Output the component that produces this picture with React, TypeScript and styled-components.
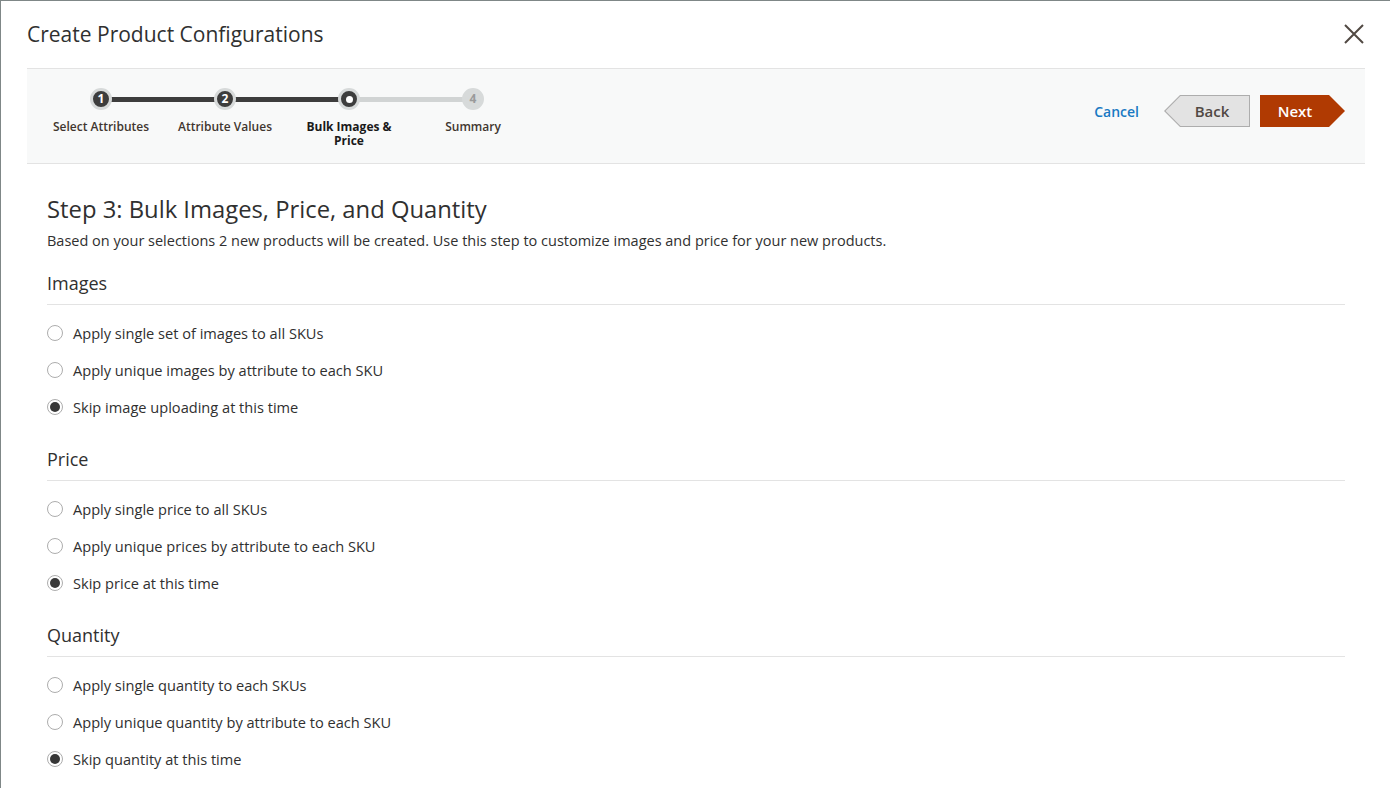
import styled, { createGlobalStyle } from "styled-components";

const GlobalStyle = createGlobalStyle`
  html, body {
    margin: 0;
    padding: 0;
    background: #fff;
  }
  body {
    font-family: "Open Sans", "Noto Sans", sans-serif;
    color: #303030;
    font-size: 14px;
  }
`;

const Page = styled.div`
  min-height: 788px;
  box-sizing: border-box;
  border-top: 1px solid #7f8787;
  border-left: 1px solid #7f8787;
  background: #fff;
`;

const Header = styled.header`
  display: flex;
  justify-content: space-between;
  align-items: center;
  padding: 19px 26px 20px 26px;
`;

const Title = styled.h1`
  margin: 0;
  font-size: 21px;
  line-height: 28px;
  font-weight: 400;
  color: #303030;
`;

const CloseButton = styled.button`
  width: 20px;
  height: 20px;
  padding: 0;
  border: 0;
  background: none;
  display: flex;
  cursor: pointer;
`;

const Bar = styled.div`
  display: flex;
  justify-content: space-between;
  align-items: flex-start;
  height: 96px;
  box-sizing: border-box;
  margin: 0 25px 0 26px;
  padding: 0 20px 0 12px;
  background: #f8f9f9;
  border-top: 1px solid #e3e3e3;
  border-bottom: 1px solid #e3e3e3;
`;

const Steps = styled.ol`
  display: flex;
  list-style: none;
  margin: 0;
  padding: 0;
`;

const Step = styled.li<{ $done: boolean; $last: boolean }>`
  position: relative;
  width: 124px;
  display: flex;
  flex-direction: column;
  align-items: center;
  padding-top: 19px;

  &::after {
    content: "";
    display: ${(p) => (p.$last ? "none" : "block")};
    position: absolute;
    top: 28px;
    left: 50%;
    width: 100%;
    height: 5px;
    background: ${(p) => (p.$done ? "#3d3d3d" : "#d1d4d4")};
    z-index: 0;
  }
`;

const Dot = styled.span<{ $state: "done" | "active" | "todo" }>`
  position: relative;
  z-index: 1;
  width: 22px;
  height: 22px;
  box-sizing: border-box;
  border-radius: 50%;
  border: 3px solid #d7dada;
  background: ${(p) => (p.$state === "todo" ? "#d7dada" : "#3d3d3d")};
  color: ${(p) => (p.$state === "todo" ? "#9a9a9a" : "#fff")};
  font-size: 12px;
  font-weight: 700;
  line-height: 16px;
  display: flex;
  align-items: center;
  justify-content: center;

  &::before {
    content: "";
    display: ${(p) => (p.$state === "active" ? "block" : "none")};
    width: 7px;
    height: 7px;
    border-radius: 50%;
    background: #fff;
  }
`;

const StepLabel = styled.span<{ $active: boolean }>`
  margin-top: 10px;
  max-width: 104px;
  text-align: center;
  font-size: 12px;
  line-height: 14px;
  font-weight: ${(p) => (p.$active ? 700 : 600)};
  color: ${(p) => (p.$active ? "#1a1a1a" : "#41362f")};
`;

const Actions = styled.div`
  display: flex;
  align-items: center;
  margin-top: 26px;
`;

const CancelLink = styled.a`
  font-size: 14px;
  font-weight: 600;
  color: #1979c3;
  text-decoration: none;
  margin-right: 25px;
  cursor: pointer;
`;

const BackButton = styled.button`
  position: relative;
  width: 86px;
  height: 32px;
  border: 0;
  padding: 0 0 0 10px;
  background: #adadad;
  clip-path: polygon(16px 0, 100% 0, 100% 100%, 16px 100%, 0 50%);
  font-family: inherit;
  font-size: 15px;
  font-weight: 600;
  color: #514943;
  cursor: pointer;

  &::before {
    content: "";
    position: absolute;
    inset: 1px;
    background: #e3e3e3;
    clip-path: polygon(15.5px 0, 100% 0, 100% 100%, 15.5px 100%, 0.6px 50%);
  }

  span {
    position: relative;
  }
`;

const NextButton = styled.button`
  width: 85px;
  height: 32px;
  border: 0;
  margin-left: 10px;
  padding: 0 15px 0 0;
  background: #b03a02;
  clip-path: polygon(0 0, 69px 0, 100% 50%, 69px 100%, 0 100%);
  font-family: inherit;
  font-size: 15px;
  font-weight: 600;
  color: #fff;
  cursor: pointer;
`;

const Content = styled.main`
  padding: 30px 45px 20px 46px;
`;

const StepTitle = styled.h2`
  margin: 0;
  font-size: 23.8px;
  line-height: 30px;
  font-weight: 400;
  color: #303030;
`;

const Intro = styled.p`
  margin: 7px 0 0;
  font-size: 14.5px;
  line-height: 20px;
  color: #303030;
`;

const Section = styled.fieldset`
  border: 0;
  margin: 20px 0 0;
  padding: 0;

  & + & {
    margin-top: 30px;
  }
`;

const SectionTitle = styled.legend`
  display: block;
  width: 100%;
  padding: 0 0 9px;
  font-size: 18px;
  line-height: 24px;
  color: #303030;
  border-bottom: 1px solid #e3e3e3;
  float: left;
`;

const Options = styled.div`
  clear: both;
  display: flex;
  flex-direction: column;
  gap: 17px;
  padding-top: 18px;
`;

const Option = styled.label`
  display: flex;
  align-items: center;
  height: 20px;
  font-size: 14.6px;
  color: #303030;
  cursor: pointer;
`;

const Radio = styled.span<{ $checked: boolean }>`
  width: 16px;
  height: 16px;
  box-sizing: border-box;
  margin: 0 10px 0 0;
  border-radius: 50%;
  border: 1px solid #adadad;
  background: #fff;
  display: flex;
  align-items: center;
  justify-content: center;

  &::after {
    content: "";
    display: ${(p) => (p.$checked ? "block" : "none")};
    width: 10px;
    height: 10px;
    border-radius: 50%;
    background: #373737;
  }
`;

const steps = ["Select Attributes", "Attribute Values", "Bulk Images & Price", "Summary"];
const current = 2;

const sections = [
  {
    title: "Images",
    options: [
      "Apply single set of images to all SKUs",
      "Apply unique images by attribute to each SKU",
      "Skip image uploading at this time",
    ],
  },
  {
    title: "Price",
    options: [
      "Apply single price to all SKUs",
      "Apply unique prices by attribute to each SKU",
      "Skip price at this time",
    ],
  },
  {
    title: "Quantity",
    options: [
      "Apply single quantity to each SKUs",
      "Apply unique quantity by attribute to each SKU",
      "Skip quantity at this time",
    ],
  },
];

export default function App() {
  return (
    <Page>
      <GlobalStyle />
      <Header>
        <Title>Create Product Configurations</Title>
        <CloseButton aria-label="Close">
          <svg width="20" height="20" viewBox="0 0 20 20">
            <path d="M1 1 L19 19 M19 1 L1 19" stroke="#514943" strokeWidth="2" />
          </svg>
        </CloseButton>
      </Header>
      <Bar>
        <Steps>
          {steps.map((label, i) => (
            <Step key={label} $done={i < current} $last={i === steps.length - 1}>
              <Dot $state={i < current ? "done" : i === current ? "active" : "todo"}>
                {i !== current ? i + 1 : null}
              </Dot>
              <StepLabel $active={i === current}>{label}</StepLabel>
            </Step>
          ))}
        </Steps>
        <Actions>
          <CancelLink>Cancel</CancelLink>
          <BackButton>
            <span>Back</span>
          </BackButton>
          <NextButton>Next</NextButton>
        </Actions>
      </Bar>
      <Content>
        <StepTitle>Step 3: Bulk Images, Price, and Quantity</StepTitle>
        <Intro>
          Based on your selections 2 new products will be created. Use this step to customize images
          and price for your new products.
        </Intro>
        {sections.map((s) => (
          <Section key={s.title}>
            <SectionTitle>{s.title}</SectionTitle>
            <Options>
              {s.options.map((o, i) => (
                <Option key={o}>
                  <Radio $checked={i === s.options.length - 1} />
                  {o}
                </Option>
              ))}
            </Options>
          </Section>
        ))}
      </Content>
    </Page>
  );
}
